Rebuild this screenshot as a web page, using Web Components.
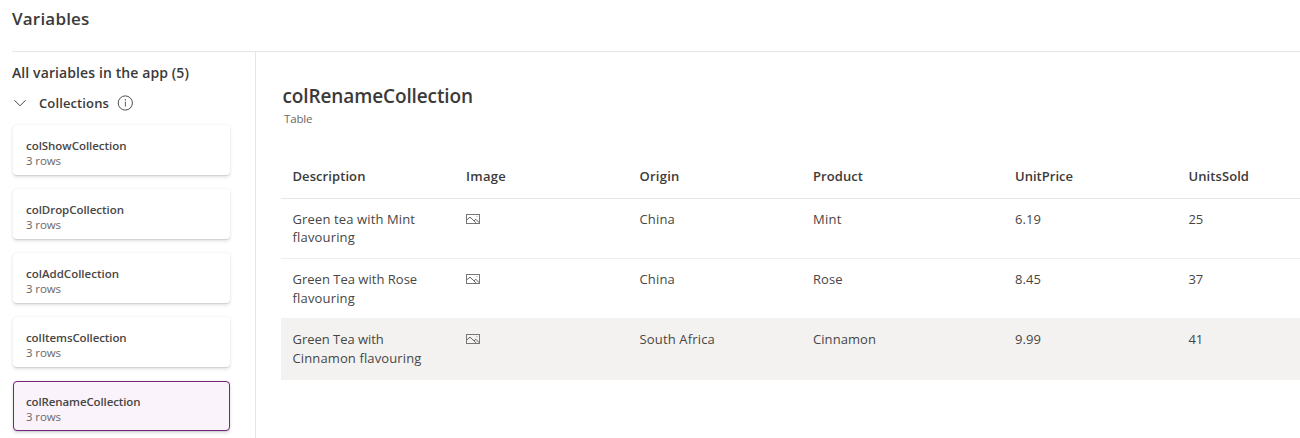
<!DOCTYPE html>
<html lang="en">
<head>
<meta charset="utf-8">
<title>Variables</title>
<style>
  body { margin: 0; background: #fff; color: #3b3a39; font-family: "Open Sans", "Noto Sans", sans-serif; }
</style>
</head>
<body>
<variables-page></variables-page>
<script>
const define = (name, html) => customElements.define(name, class extends HTMLElement {
  connectedCallback() {
    if (this.shadowRoot) return;
    const root = this.attachShadow({ mode: "open" });
    const t = document.createElement("template");
    t.innerHTML = typeof html === "function" ? html(this) : html;
    root.append(t.content.cloneNode(true));
  }
});

define("icon-chevron", `
<style>:host{display:block;width:12px;height:8px}svg{display:block}</style>
<svg width="12" height="8" viewBox="0 0 12 8" fill="none" stroke="#484644" stroke-width="1"><path d="M.4 1.2 6 6.8 11.6 1.2"/></svg>`);

define("icon-info", `
<style>:host{display:block;width:16px;height:16px}svg{display:block}</style>
<svg width="16" height="16" viewBox="0 0 16 16"><circle cx="8.3" cy="8" r="7.1" fill="none" stroke="#484644" stroke-width=".95"/><path d="M8.4 6.6V11.5" stroke="#605e5c" stroke-width="1"/><rect x="7.8" y="4.2" width="1.2" height="1.3" fill="#605e5c"/></svg>`);

define("icon-image", `
<style>:host{display:block;width:14px;height:10px}svg{display:block}</style>
<svg width="14" height="10" viewBox="0 0 14 10" fill="none" stroke="#797775"><rect x=".5" y=".5" width="13" height="9" stroke-width="1"/><path d="M.8 5.9 4 3.1 10.4 9.2M8 6.8 9.8 5.3 13.2 8.6" stroke="#605e5c" stroke-width=".95"/><rect x="10.5" y="2" width="1" height="1" fill="#a19f9d" stroke="none"/></svg>`);

define("collection-card", el => `
<style>
  :host{display:block;box-sizing:border-box;width:217px;height:50px;padding:12px 12px 0;border:1px solid transparent;border-radius:4px;background:#fff;
    box-shadow:0 1.6px 3.6px rgba(0,0,0,.13),0 .3px .9px rgba(0,0,0,.08)}
  :host([selected]){background:#faf3fc;border-color:#742774}
  .name,.rows{white-space:nowrap;line-height:15px}
  .name{font-size:11.5px;font-weight:600;color:#484644;letter-spacing:${el.getAttribute("track")}px}
  .rows{font-size:11.5px;color:#6a6866;letter-spacing:-.1px}
</style>
<div class="name"><slot></slot></div><div class="rows">3 rows</div>`);

define("variables-sidebar", `
<style>
  :host{display:flex;flex-direction:column;box-sizing:border-box;width:256px;height:386px;padding:11px 0 0 12px;border-right:1px solid #e6e6e6}
  h2{margin:0;font-size:14px;font-weight:600;line-height:20px;letter-spacing:.1px;white-space:nowrap}
  .group{display:flex;align-items:center;height:20px;margin-top:10px;padding-left:2px;font-size:13px;font-weight:600;letter-spacing:.12px}
  .group span{margin:0 8px 0 13px}
  .list{display:flex;flex-direction:column;gap:14px;margin:12px 0 0 1px}
</style>
<h2>All variables in the app (5)</h2>
<div class="group"><icon-chevron></icon-chevron><span>Collections</span><icon-info></icon-info></div>
<div class="list">
  <collection-card track="-.04">colShowCollection</collection-card>
  <collection-card track="-.04">colDropCollection</collection-card>
  <collection-card track="0">colAddCollection</collection-card>
  <collection-card track="-.1">colItemsCollection</collection-card>
  <collection-card track="-.12" selected>colRenameCollection</collection-card>
</div>`);

const headings = [["Description", .08], ["Image", .28], ["Origin", .24], ["Product", .07], ["UnitPrice", .02], ["UnitsSold", .08]];
const rows = [
  [["Green tea with Mint", .13], ["flavouring", .17], ["China", .17], ["Mint", .23], ["6.19", .07], ["25", -.1]],
  [["Green Tea with Rose", .01], ["flavouring", .17], ["China", .17], ["Rose", .1], ["8.45", .07], ["37", -.1]],
  [["Green Tea with", -.03], ["Cinnamon flavouring", .12], ["South Africa", .16], ["Cinnamon", .07], ["9.99", .07], ["41", -.1]]
];
const tracked = ([text, ls]) => `<span style="letter-spacing:${ls}px">${text}</span>`;

define("collection-table", () => `
<style>
  :host{display:block}
  .row{display:grid;grid-template-columns:173.5px 173.5px 173.5px 202px 173.5px 1fr;padding-left:11.5px;box-sizing:border-box;
    height:60px;padding-top:11px;border-bottom:1px solid #f0efee;font-size:13px;line-height:19px;color:#484644;white-space:nowrap}
  .head{height:45px;padding-top:13px;font-weight:600;border-color:#e6e6e6;color:#3b3a39}
  .row:nth-of-type(2) > div:first-child{line-height:18px}
  .row:nth-of-type(3){border-color:#f3f2f1}
  .row:last-child{height:61px;background:#f3f2f1;border-color:#f3f2f1}
  icon-image{margin-top:4px}
</style>
<div class="row head">${headings.map(h => `<div>${tracked(h)}</div>`).join("")}</div>
${rows.map(([a, b, ...rest]) => `<div class="row"><div>${tracked(a)}<br>${tracked(b)}</div><div><icon-image></icon-image></div>${rest.map(c => `<div>${tracked(c)}</div>`).join("")}</div>`).join("")}`);

define("collection-detail", `
<style>
  :host{display:block;flex:1;padding:31px 0 0 25px}
  h1{margin:0 0 0 1.5px;font-size:19px;font-weight:600;line-height:26px;letter-spacing:-.12px}
  p{margin:2px 0 27px 3px;font-size:11.5px;line-height:16px;letter-spacing:-.15px;color:#6a6866}
</style>
<h1>colRenameCollection</h1><p>Table</p>
<collection-table></collection-table>`);

define("variables-page", `
<style>
  :host{display:block;width:1300px;height:438px;overflow:hidden}
  header{box-sizing:border-box;height:52px;margin-left:12px;padding-top:6px;border-bottom:1px solid #e6e6e6;font-size:17px;font-weight:600;line-height:25px;letter-spacing:.2px}
  main{display:flex}
</style>
<header>Variables</header>
<main><variables-sidebar></variables-sidebar><collection-detail></collection-detail></main>`);
</script>
</body>
</html>
